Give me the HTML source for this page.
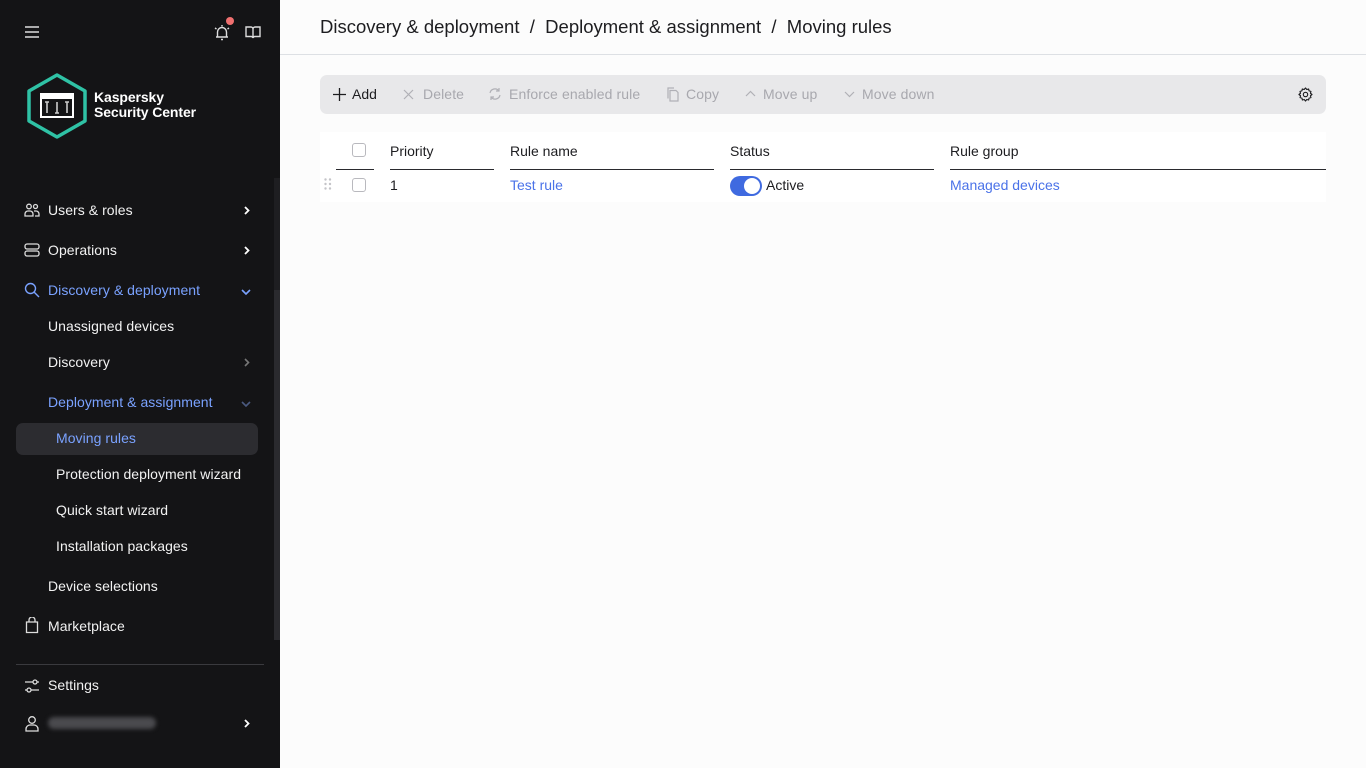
<!DOCTYPE html>
<html><head><meta charset="utf-8"><style>
*{margin:0;padding:0;box-sizing:border-box}
body{width:1366px;height:768px;overflow:hidden;font-family:"Liberation Sans",sans-serif;background:#fcfcfc;position:relative}
#sb{position:absolute;left:0;top:0;width:280px;height:768px;background:#141416;color:#fff}
.a{position:absolute;white-space:nowrap}
.it{font-size:14px;color:#f2f2f2;letter-spacing:0.05px}
.bl{color:#7aa2ff}
#main{position:absolute;left:280px;top:0;width:1086px;height:768px}
.tb{font-size:14px;color:#a8a8ae;letter-spacing:0.1px}
.th{font-size:14px;color:#1d1d20;letter-spacing:0}
.ln{position:absolute;height:1px;background:#2a2a2e;top:169px}
.cb{position:absolute;width:14px;height:14px;border:1px solid #b9b9be;border-radius:3px;background:#fff}
svg{position:absolute}
</style></head><body>
<div id="sb">
 <svg style="left:24px;top:25px" width="16" height="14" viewBox="0 0 16 14"><path d="M1 2h14M1 7h14M1 12h14" stroke="#ddd" stroke-width="1.6"/></svg>
 <svg style="left:212px;top:22px" width="20" height="20" viewBox="0 0 20 20"><path d="M4 15h12M5.5 15V10a4.5 4.5 0 019 0v5M10 3v1.5M3 6l1.5 1M17 6l-1.5 1M9 17.5h2" stroke="#ddd" stroke-width="1.4" fill="none"/></svg>
 <div class="a" style="left:226px;top:17px;width:8px;height:8px;border-radius:50%;background:#f07070"></div>
 <svg style="left:245px;top:25px" width="16" height="14" viewBox="0 0 16 14"><path d="M1 2h5a2 2 0 012 2v9a2 2 0 00-2-1.5H1zM15 2h-5a2 2 0 00-2 2v9a2 2 0 012-1.5h5z" stroke="#ddd" stroke-width="1.4" fill="none"/></svg>
 <svg style="left:26px;top:73px" width="62" height="66" viewBox="0 0 62 66"><path d="M31 2L59 18V48L31 64L3 48V18Z" stroke="#2fc2a5" stroke-width="3.5" fill="none" stroke-linejoin="round"/><rect x="14" y="20" width="34" height="25" fill="#fff"/><rect x="16" y="26" width="30" height="17" fill="#141416"/><path d="M21 29v11M19 29h4M31 29v11M29 40h4M41 29v11M39 29h4" stroke="#ccc" stroke-width="1.6"/></svg>
 <div class="a" style="left:94px;top:90px;font-size:14px;font-weight:bold;line-height:15px;letter-spacing:-0.1px">Kaspersky<br>Security Center</div>
 <div class="a" style="left:274px;top:178px;width:6px;height:462px;background:#1e1e21"></div>
 <div class="a" style="left:274px;top:290px;width:6px;height:350px;background:#2a2a2e"></div>

 <svg style="left:24px;top:203px" width="16" height="14" viewBox="0 0 16 14"><circle cx="5" cy="3.5" r="2.3" stroke="#ddd" fill="none" stroke-width="1.3"/><circle cx="11.5" cy="3.5" r="2" stroke="#ddd" fill="none" stroke-width="1.3"/><path d="M1 13v-2a3 3 0 013-3h2a3 3 0 013 3v2zM10 8h2a3 3 0 013 3v2h-4" stroke="#ddd" fill="none" stroke-width="1.3"/></svg>
 <div class="a it" style="left:48px;top:202px">Users &amp; roles</div>
 <svg style="left:244px;top:206px" width="6" height="9" viewBox="0 0 6 9"><path d="M1 1l3.5 3.5L1 8" stroke="#fff" stroke-width="1.8" fill="none"/></svg>
 <svg style="left:24px;top:243px" width="16" height="14" viewBox="0 0 16 14"><rect x="1" y="1" width="14" height="5" rx="2" stroke="#ddd" fill="none" stroke-width="1.3"/><rect x="1" y="8" width="14" height="5" rx="2" stroke="#ddd" fill="none" stroke-width="1.3"/></svg>
 <div class="a it" style="left:48px;top:242px">Operations</div>
 <svg style="left:244px;top:246px" width="6" height="9" viewBox="0 0 6 9"><path d="M1 1l3.5 3.5L1 8" stroke="#fff" stroke-width="1.8" fill="none"/></svg>
 <svg style="left:24px;top:282px" width="16" height="16" viewBox="0 0 16 16"><circle cx="6.5" cy="6.5" r="5" stroke="#7aa2ff" fill="none" stroke-width="1.4"/><path d="M10 10l5 5" stroke="#7aa2ff" stroke-width="1.4"/></svg>
 <div class="a it bl" style="left:48px;top:282px">Discovery &amp; deployment</div>
 <svg style="left:241px;top:289px" width="10" height="6" viewBox="0 0 10 6"><path d="M1 1l4 4 4-4" stroke="#7aa2ff" stroke-width="1.6" fill="none"/></svg>
 <div class="a it" style="left:48px;top:318px">Unassigned devices</div>
 <div class="a it" style="left:48px;top:354px">Discovery</div>
 <svg style="left:244px;top:358px" width="6" height="9" viewBox="0 0 6 9"><path d="M1 1l3.5 3.5L1 8" stroke="#777" stroke-width="1.6" fill="none"/></svg>
 <div class="a it bl" style="left:48px;top:394px">Deployment &amp; assignment</div>
 <svg style="left:241px;top:401px" width="10" height="6" viewBox="0 0 10 6"><path d="M1 1l4 4 4-4" stroke="#4b5a80" stroke-width="1.6" fill="none"/></svg>
 <div class="a" style="left:16px;top:423px;width:242px;height:32px;border-radius:7px;background:#2c2c30"></div>
 <div class="a it bl" style="left:56px;top:430px">Moving rules</div>
 <div class="a it" style="left:56px;top:466px">Protection deployment wizard</div>
 <div class="a it" style="left:56px;top:502px">Quick start wizard</div>
 <div class="a it" style="left:56px;top:538px">Installation packages</div>
 <div class="a it" style="left:48px;top:578px">Device selections</div>
 <svg style="left:25px;top:617px" width="14" height="17" viewBox="0 0 14 17"><path d="M1.5 5h11v10.5h-11zM4 5V3a3 3 0 016 0v2" stroke="#ddd" fill="none" stroke-width="1.3"/></svg>
 <div class="a it" style="left:48px;top:618px">Marketplace</div>
 <div class="a" style="left:16px;top:664px;width:248px;height:1px;background:#3a3a3e"></div>
 <svg style="left:24px;top:678px" width="16" height="16" viewBox="0 0 16 16"><path d="M1 4h8M13 4h2M1 12h2M7 12h8" stroke="#ddd" stroke-width="1.3"/><circle cx="11" cy="4" r="2" stroke="#ddd" fill="none" stroke-width="1.3"/><circle cx="5" cy="12" r="2" stroke="#ddd" fill="none" stroke-width="1.3"/></svg>
 <div class="a it" style="left:48px;top:677px">Settings</div>
 <svg style="left:25px;top:715px" width="14" height="17" viewBox="0 0 14 17"><circle cx="7" cy="5" r="3.3" stroke="#ddd" fill="none" stroke-width="1.3"/><path d="M1 16v-2a4 4 0 014-4h4a4 4 0 014 4v2z" stroke="#ddd" fill="none" stroke-width="1.3"/></svg>
 <div class="a" style="left:48px;top:717px;width:108px;height:12px;border-radius:6px;background:#4a4a4e;filter:blur(2px)"></div>
 <svg style="left:244px;top:719px" width="6" height="9" viewBox="0 0 6 9"><path d="M1 1l3.5 3.5L1 8" stroke="#fff" stroke-width="1.8" fill="none"/></svg>
</div>

<div id="main">
 <div class="a" style="left:40px;top:16px;font-size:18.5px;color:#1d1d20;letter-spacing:0">Discovery &amp; deployment &nbsp;/&nbsp; Deployment &amp; assignment &nbsp;/&nbsp; Moving rules</div>
 <div class="a" style="left:0;top:54px;width:1086px;height:1px;background:#dde0e4"></div>
 <div class="a" style="left:40px;top:75px;width:1006px;height:39px;border-radius:7px;background:#e8e8ea"></div>
 <svg style="left:53px;top:88px" width="13" height="13" viewBox="0 0 13 13"><path d="M6.5 0v13M0 6.5h13" stroke="#1d1d20" stroke-width="1.3"/></svg>
 <div class="a th" style="left:72px;top:86px">Add</div>
 <svg style="left:123px;top:89px" width="11" height="11" viewBox="0 0 11 11"><path d="M1 1l9 9M10 1l-9 9" stroke="#b0b0b6" stroke-width="1.2"/></svg>
 <div class="a tb" style="left:143px;top:86px">Delete</div>
 <svg style="left:208px;top:87px" width="14" height="14" viewBox="0 0 14 14"><path d="M2 6a5 5 0 019-2M12 8a5 5 0 01-9 2M11 1v3H8M3 13v-3h3" stroke="#b0b0b6" stroke-width="1.2" fill="none"/></svg>
 <div class="a tb" style="left:229px;top:86px">Enforce enabled rule</div>
 <svg style="left:386px;top:87px" width="13" height="15" viewBox="0 0 13 15"><path d="M4 3.5h6l2 2v8.5H4zM2 11.5V1h6" stroke="#b0b0b6" stroke-width="1.2" fill="none"/></svg>
 <div class="a tb" style="left:406px;top:86px">Copy</div>
 <svg style="left:465px;top:90px" width="11" height="7" viewBox="0 0 11 7"><path d="M1 6l4.5-4.5L10 6" stroke="#b0b0b6" stroke-width="1.2" fill="none"/></svg>
 <div class="a tb" style="left:483px;top:86px">Move up</div>
 <svg style="left:564px;top:91px" width="11" height="7" viewBox="0 0 11 7"><path d="M1 1l4.5 4.5L10 1" stroke="#b0b0b6" stroke-width="1.2" fill="none"/></svg>
 <div class="a tb" style="left:582px;top:86px">Move down</div>
 <svg style="left:1018px;top:87px" width="15" height="15" viewBox="0 0 24 24"><path d="M12 1.5l2 2.5 3-.8.7 3 3 .8-.8 3 2.5 2-2.5 2 .8 3-3 .8-.7 3-3-.8-2 2.5-2-2.5-3 .8-.7-3-3-.8.8-3L1.5 12 4 10l-.8-3 3-.8.7-3 3 .8z" stroke="#1d1d20" stroke-width="1.8" fill="none" stroke-linejoin="round"/><circle cx="12" cy="12" r="3.5" stroke="#1d1d20" stroke-width="1.8" fill="none"/></svg>
 <div class="a" style="left:40px;top:132px;width:1006px;height:70px;background:#fff"></div>
 <div class="cb" style="left:72px;top:143px"></div>
 <div class="a th" style="left:110px;top:143px">Priority</div>
 <div class="a th" style="left:230px;top:143px">Rule name</div>
 <div class="a th" style="left:450px;top:143px">Status</div>
 <div class="a th" style="left:670px;top:143px">Rule group</div>
 <div class="ln" style="left:56px;width:38px"></div>
 <div class="ln" style="left:110px;width:104px"></div>
 <div class="ln" style="left:230px;width:204px"></div>
 <div class="ln" style="left:450px;width:204px"></div>
 <div class="ln" style="left:670px;width:376px"></div>
 <svg style="left:44px;top:178px" width="8" height="12" viewBox="0 0 8 12"><g fill="#c4c4c8"><circle cx="1.5" cy="1.5" r="1.2"/><circle cx="6" cy="1.5" r="1.2"/><circle cx="1.5" cy="6" r="1.2"/><circle cx="6" cy="6" r="1.2"/><circle cx="1.5" cy="10.5" r="1.2"/><circle cx="6" cy="10.5" r="1.2"/></g></svg>
 <div class="cb" style="left:72px;top:178px"></div>
 <div class="a th" style="left:110px;top:177px">1</div>
 <div class="a th" style="left:230px;top:177px;color:#4a72e8">Test rule</div>
 <div class="a" style="left:450px;top:176px;width:32px;height:20px;border-radius:10px;background:#3f6ae0"></div>
 <div class="a" style="left:464px;top:178px;width:16px;height:16px;border-radius:50%;background:#fff"></div>
 <div class="a th" style="left:486px;top:177px">Active</div>
 <div class="a th" style="left:670px;top:177px;color:#4a72e8">Managed devices</div>
</div>
</body></html>
